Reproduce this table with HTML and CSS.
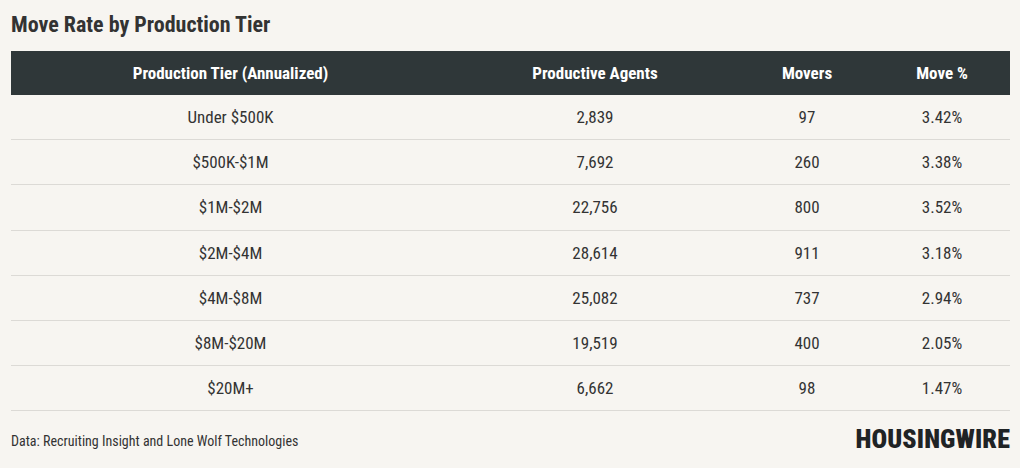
FILE: index.html
```html
<!DOCTYPE html>
<html>
<head>
<meta charset="utf-8">
<link rel="stylesheet" href="styles.css">
</head>
<body>
<div class="chart">
  <h1 class="title">Move Rate by Production Tier</h1>
  <table class="data">
    <colgroup>
      <col class="c1"><col class="c2"><col class="c3"><col class="c4">
    </colgroup>
    <thead>
      <tr><th>Production Tier (Annualized)</th><th>Productive Agents</th><th>Movers</th><th>Move %</th></tr>
    </thead>
    <tbody>
      <tr><td>Under $500K</td><td>2,839</td><td>97</td><td>3.42%</td></tr>
      <tr><td>$500K-$1M</td><td>7,692</td><td>260</td><td>3.38%</td></tr>
      <tr><td>$1M-$2M</td><td>22,756</td><td>800</td><td>3.52%</td></tr>
      <tr><td>$2M-$4M</td><td>28,614</td><td>911</td><td>3.18%</td></tr>
      <tr><td>$4M-$8M</td><td>25,082</td><td>737</td><td>2.94%</td></tr>
      <tr><td>$8M-$20M</td><td>19,519</td><td>400</td><td>2.05%</td></tr>
      <tr><td>$20M+</td><td>6,662</td><td>98</td><td>1.47%</td></tr>
    </tbody>
  </table>
  <div class="footer">
    <span class="source">Data: Recruiting Insight and Lone Wolf Technologies</span>
    <span class="logo">HOUSINGWIRE</span>
  </div>
</div>
</body>
</html>
```
FILE: styles.css
```css
html, body {
  margin: 0;
  padding: 0;
  background: #f7f5f1;
}
body {
  font-family: "Roboto Condensed", "Roboto", sans-serif;
  color: #333;
}
.chart {
  width: 999px;
  padding: 0 10px 0 11px;
}
.title {
  margin: 0;
  padding-top: 11px;
  height: 51px;
  box-sizing: border-box;
  font-size: 22px;
  line-height: 28px;
  font-weight: 700;
  color: #333;
}
.data {
  width: 999px;
  border-collapse: collapse;
  table-layout: fixed;
}
.c1 { width: 439px; }
.c2 { width: 290px; }
.c3 { width: 134px; }
.c4 { width: 136px; }
.data th {
  background: #2f3739;
  color: #fff;
  font-weight: 700;
  font-size: 17px;
  height: 44px;
  padding: 0;
  text-align: center;
  vertical-align: middle;
}
.data td {
  height: 44.2px;
  padding: 0;
  text-align: center;
  vertical-align: middle;
  font-size: 17px;
  color: #333;
  border-bottom: 1px solid #dcdad6;
}
.footer {
  display: flex;
  justify-content: space-between;
  align-items: center;
  height: 56px;
}
.source {
  font-size: 14px;
  color: #333;
  padding-top: 4px;
}
.logo {
  font-size: 26px;
  font-weight: 900;
  color: #1f2325;
  letter-spacing: 0.1px;
  line-height: 1;
}
```
